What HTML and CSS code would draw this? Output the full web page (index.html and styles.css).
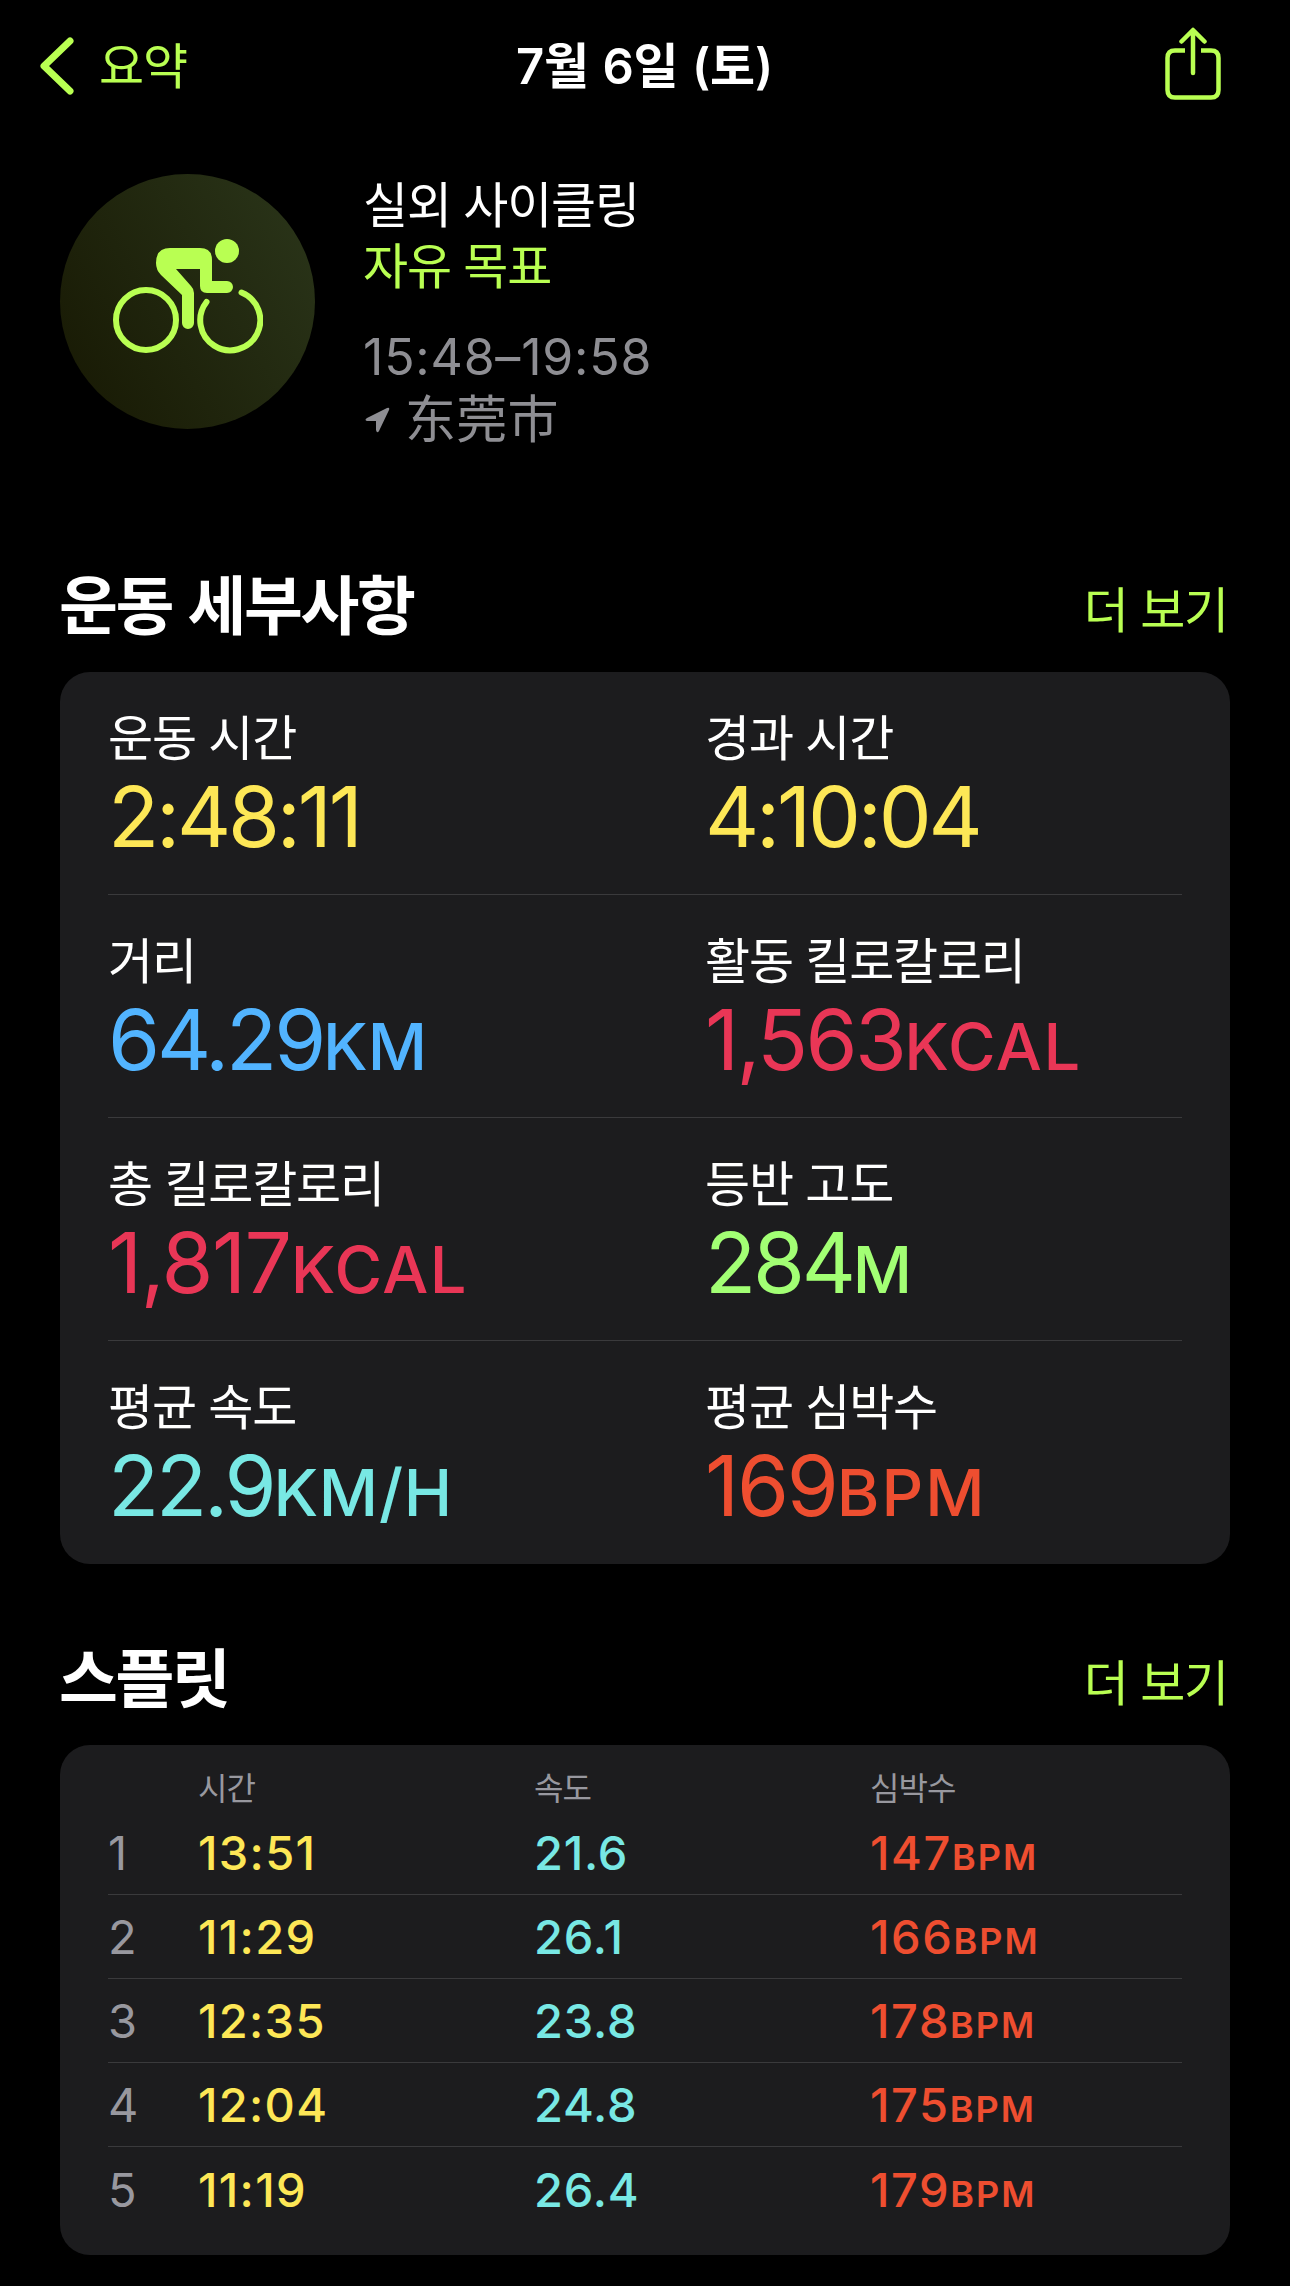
FILE: index.html
```html
<!DOCTYPE html>
<html lang="ko">
	<head>
		<meta charset="UTF-8">
		<title>7월 6일 (토)</title>
		<link rel="stylesheet" href="styles.css">
	</head>
	<body>
		<div id="nav">
			<a class="back" href="#">
				<svg width="34" height="58" viewBox="0 0 34 58"><path d="M30 4L4 29L30 54"/></svg>
				<span>요약</span>
			</a>
			<h1><b>7</b>월 <b>6</b>일 <b>(</b>토<b>)</b></h1>
			<a class="share" href="#">
				<svg width="58" height="74" viewBox="0 0 58 74">
					<path stroke-linecap="butt" d="M21 23.500H11Q3.500 23.500 3.500 31V63Q3.500 70.500 11 70.500H47Q54.500 70.500 54.500 63V31Q54.500 23.500 47 23.500H37"/>
					<path d="M29 46V4M17.500 14.500L29 3L40.500 14.500"/>
				</svg>
			</a>
		</div>
		<div id="workout">
			<div class="badge">
				<svg width="150" height="116" viewBox="0 0 150 116">
					<circle class="line" cx="33" cy="81" r="30"/>
					<path class="line" d="M93.500 63A30 30 0 1 0 128.500 53.500"/>
					<circle cx="114" cy="12" r="12"/>
					<path d="M57 9H87Q99 9 99 21V42H114A6 6 0 0 1 114 54H94Q87 54 87 47V30H63L78 47Q81 50 81 54V84A6 6 0 0 1 69 84V56L48 36Q43 31 43 24Q43 9 57 9Z"/>
				</svg>
			</div>
			<div class="info">
				<p>실외 사이클링</p>
				<p class="goal">자유 목표</p>
				<p class="time">15:48–19:58</p>
				<p class="place">
					<svg width="25" height="26" viewBox="0 0 25 26"><path d="M22 1Q25 0 24 3L14 24Q12 27 11 23V14H2Q-1 13 2 11Z"/></svg>
					<span>东莞市</span>
				</p>
			</div>
		</div>
		<div class="title"><h2>운동 세부사항</h2><a href="#">더 보기</a></div>
		<ul id="detail">
			<li>
				<div><p>운동 시간</p><strong class="yellow">2:48:11</strong></div>
				<div><p>경과 시간</p><strong class="yellow">4:10:04</strong></div>
			</li>
			<li>
				<div><p>거리</p><strong class="blue">64.29<small>KM</small></strong></div>
				<div><p>활동 킬로칼로리</p><strong class="pink active">1,563<small>KCAL</small></strong></div>
			</li>
			<li>
				<div><p>총 킬로칼로리</p><strong class="pink total">1,817<small>KCAL</small></strong></div>
				<div><p>등반 고도</p><strong class="green">284<small>M</small></strong></div>
			</li>
			<li>
				<div><p>평균 속도</p><strong class="cyan">22.9<small>KM/H</small></strong></div>
				<div><p>평균 심박수</p><strong class="orange">169<small>BPM</small></strong></div>
			</li>
		</ul>
		<div class="title"><h2>스플릿</h2><a href="#">더 보기</a></div>
		<ul id="split">
			<li class="head"><i></i><span>시간</span><span>속도</span><span>심박수</span></li>
			<li><i>1</i><b class="yellow">13:51</b><b class="cyan">21.6</b><b class="orange">147<small>BPM</small></b></li>
			<li><i>2</i><b class="yellow">11:29</b><b class="cyan">26.1</b><b class="orange">166<small>BPM</small></b></li>
			<li><i>3</i><b class="yellow">12:35</b><b class="cyan">23.8</b><b class="orange">178<small>BPM</small></b></li>
			<li><i>4</i><b class="yellow">12:04</b><b class="cyan">24.8</b><b class="orange">175<small>BPM</small></b></li>
			<li><i>5</i><b class="yellow">11:19</b><b class="cyan">26.4</b><b class="orange">179<small>BPM</small></b></li>
		</ul>
	</body>
</html>
```
FILE: styles.css
```css
*{padding: 0;margin: 0;box-sizing: border-box;}
li{list-style: none;}
a{color: #b9ff52;text-decoration: none;}
svg{display: block;fill: none;}
body{width: 1290px;height: 2286px;overflow: hidden;background: #000;color: #fff;
	font: 49px/61px "Noto Sans CJK KR", sans-serif;
	letter-spacing: -1.2px;}

/* nav bar */
#nav{height: 128px;padding: 0 68px 0 40px;display: grid;grid-template-columns: 1fr auto 1fr;align-items: center;}
#nav svg{stroke: #b9ff52;stroke-linecap: round;stroke-linejoin: round;}
.back{display: flex;align-items: center;gap: 25px;}
.back svg{margin-top: 3px;stroke-width: 7;}
.back span{margin-top: -3px;}
#nav h1{padding-left: 27px;font-size: 49px;font-weight: 700;letter-spacing: -0.200px;}
#nav h1 b{font-family: Inter, sans-serif;font-weight: 600;}
.share{justify-self: end;}
.share svg{stroke-width: 4.500;}

/* workout */
#workout{display: flex;height: 435px;padding: 46px 60px 0;}
.badge{width: 255px;height: 255px;padding: 65px 0 0 53px;border-radius: 50%;
	background: linear-gradient(60deg, #191b05 10%, #293318 90%);}
.badge svg{fill: #b9ff52;}
.badge .line{fill: none;stroke: #b9ff52;stroke-width: 6;stroke-linecap: round;}
.info{margin: -3px 0 0 48px;}
.goal{color: #b9ff52;}
.time{margin-top: 36px;color: #8e8e93;font-family: Inter, sans-serif;font-size: 50px;line-height: 57px;letter-spacing: 0.800px;}
.place{display: flex;align-items: center;gap: 15px;color: #8e8e93;
	font-family: "Noto Sans CJK SC", sans-serif;font-size: 51px;letter-spacing: 0.300px;}
.place svg{margin: 6px 0 0 2px;fill: #8e8e93;}

/* section title */
.title{display: flex;justify-content: space-between;align-items: flex-end;height: 109px;padding: 0 62px 35px 59px;}
.title h2{font-size: 64px;line-height: 72px;letter-spacing: -2.400px;}
.title a{line-height: 60px;}

/* detail card */
#detail{margin: 0 60px;padding: 0 48px;border-radius: 30px;background: #1c1c1e;}
#detail li{height: 223px;padding-top: 33px;display: grid;grid-template-columns: 597px 1fr;border-bottom: 1px solid #3a3a3c;}
#detail li:last-child{border: 0;}
#detail p{line-height: 60px;}
#detail strong{display: block;font: 400 84px/103px Inter, sans-serif;letter-spacing: -3.200px;}
#detail .total{letter-spacing: -1.500px;}
#detail .active{letter-spacing: -2.600px;}
#detail .orange{letter-spacing: -2.200px;}
#detail small{font-size: 65px;font-weight: 500;line-height: 1;letter-spacing: 0;}
#detail .pink small{letter-spacing: 1.500px;}
#detail .cyan small{letter-spacing: 0.800px;}
#detail .orange small{letter-spacing: 2px;}
#detail + .title{height: 181px;}

/* split card */
#split{height: 510px;margin: 0 60px;padding: 0 48px;border-radius: 30px;background: #1c1c1e;}
#split li{height: 84px;display: grid;grid-template-columns: 90px 336px 336px 1fr;align-items: center;
	border-bottom: 1px solid #3a3a3c;font-family: Inter, sans-serif;font-size: 47px;}
#split li:last-child{border: 0;}
#split .head{height: 66px;padding-top: 16px;border: 0;color: #98989f;
	font-family: "Noto Sans CJK KR", sans-serif;font-size: 32px;line-height: 40px;letter-spacing: -1px;}
#split i{color: #98989f;font-style: normal;}
#split b{font-weight: 500;letter-spacing: 0.800px;}
#split .yellow{letter-spacing: 1.300px;}
#split .orange{letter-spacing: 1.600px;}
#split small{font-size: 36px;font-weight: 600;line-height: 1;letter-spacing: 2px;}

.yellow{color: #fde756;}
.blue{color: #52b4ff;}
.pink{color: #e93656;}
.green{color: #a2ff74;}
.cyan{color: #78e8e4;}
.orange{color: #ee4e30;}
```
